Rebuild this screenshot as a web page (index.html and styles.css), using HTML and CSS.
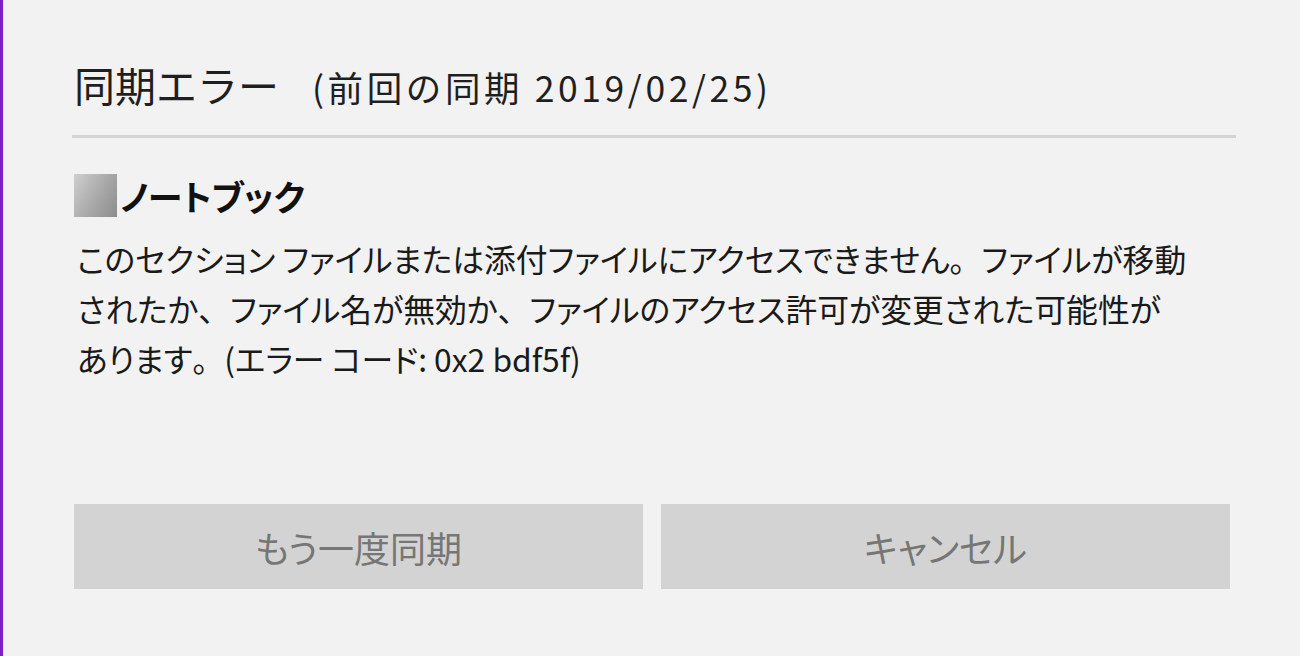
FILE: index.html
```html
<!DOCTYPE html>
<html lang="ja">
<head>
<meta charset="utf-8">
<link rel="stylesheet" href="styles.css">
</head>
<body>
<div class="pane">
  <div class="header">
    <span class="title">同期エラー</span>
    <span class="subtitle">(前回の同期 2019/02/25)</span>
  </div>
  <div class="rule"></div>
  <div class="notebook">
    <span class="nb-icon"></span>
    <span class="nb-name">ノートブック</span>
  </div>
  <p class="message">このセクション ファイルまたは添付ファイルにアクセスできません<span class="punct">。</span>ファイルが移動<br>されたか<span class="punct">、</span>ファイル名が無効か<span class="punct">、</span>ファイルのアクセス許可が変更された可能性が<br>あります<span class="punct">。</span>(エラー コード: 0x2 bdf5f)</p>
  <div class="actions">
    <button class="btn">もう一度同期</button>
    <button class="btn">キャンセル</button>
  </div>
</div>
</body>
</html>
```

FILE: styles.css
```css
html, body {
  margin: 0;
  padding: 0;
  height: 100%;
  background: #f2f2f2;
}
body {
  font-family: "Noto Sans CJK JP", "Noto Sans", sans-serif;
  font-feature-settings: "palt";
  color: #1a1a1a;
  border-left: 3px solid #7e1fc6;
  box-sizing: border-box;
  overflow: hidden;
}
.pane {
  padding: 0 66px 0 71px;
  display: flex;
  flex-direction: column;
}
.header {
  display: flex;
  align-items: baseline;
  gap: 33px;
  height: 135px;
  padding-top: 54px;
  box-sizing: border-box;
  white-space: nowrap;
}
.title {
  font-size: 41px;
  line-height: 60px;
  font-feature-settings: normal;
  color: #1f1f1f;
}
.subtitle {
  font-size: 35.5px;
  line-height: 60px;
  letter-spacing: 3.6px;
  font-feature-settings: normal;
  color: #1f1f1f;
}
.rule {
  height: 3px;
  background: #d4d4d4;
  margin-left: -2px;
  margin-right: -2px;
}
.notebook {
  display: flex;
  align-items: center;
  margin-top: 36px;
  height: 43px;
}
.nb-icon {
  width: 43px;
  height: 43px;
  background: linear-gradient(120deg, #cfcfcf 0%, #a8a8a8 55%, #8c8c8c 100%);
  flex: none;
}
.nb-name {
  font-size: 35px;
  font-weight: bold;
  line-height: 43px;
  margin-left: 3px;
  color: #111;
}
.message {
  margin: 16px 0 0 3px;
  font-size: 31.8px;
  line-height: 50px;
  white-space: nowrap;
  color: #1a1a1a;
}
.punct {
  font-feature-settings: normal;
}
.actions {
  display: flex;
  gap: 18px;
  margin-top: 121px;
  padding-right: 4px;
}
.btn {
  flex: 1;
  height: 85px;
  border: none;
  background: #d3d3d3;
  font-family: "Noto Sans CJK JP", "Noto Sans", sans-serif;
  font-feature-settings: "palt";
  font-size: 36px;
  color: #767676;
  padding: 0;
}
```
